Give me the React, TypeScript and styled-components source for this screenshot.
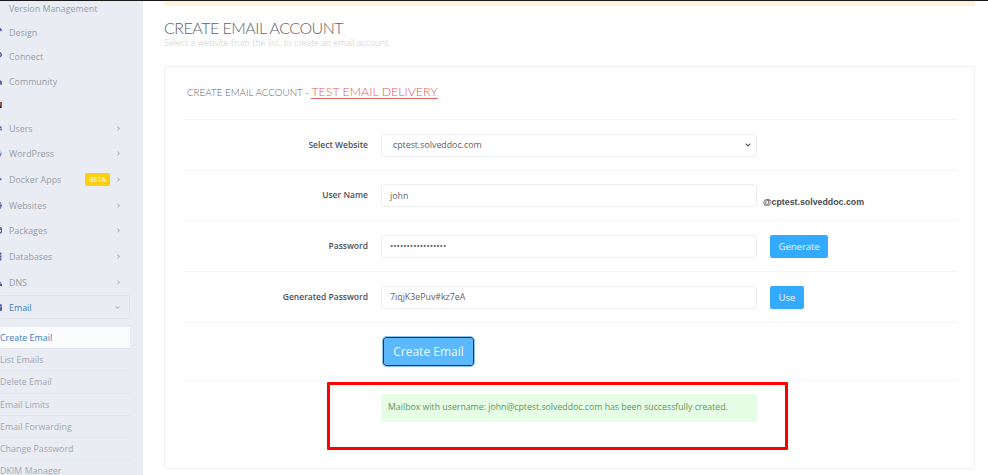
import React from 'react';
import styled, { createGlobalStyle } from 'styled-components';
import { FaChevronRight, FaChevronDown, FaUsers, FaWordpress, FaDocker, FaGlobe, FaCube, FaDatabase, FaSitemap, FaEnvelope, FaPencilAlt, FaLink, FaComments } from 'react-icons/fa';

const GlobalStyle = createGlobalStyle`
  html, body {
    margin: 0;
    padding: 0;
    background: #fff;
    font-family: "Open Sans", "Liberation Sans", sans-serif;
  }
`;

const Page = styled.div`
  display: grid;
  grid-template-columns: 143px 1fr;
  height: 475px;
  width: 988px;
  overflow: hidden;
  position: relative;
  border-top: 1px solid #1a1a1a;
  box-sizing: border-box;
`;

const Sidebar = styled.nav`
  background: #e9ecf3;
  overflow: hidden;
  height: 475px;
`;

const SideList = styled.div`
  display: flex;
  flex-direction: column;
  margin-top: -5px;
  width: 130px;
`;

const SideRow = styled.div<{ $h: number; $active?: boolean }>`
  display: flex;
  align-items: center;
  height: ${(p) => p.$h}px;
  flex: none;
  color: ${(p) => (p.$active ? '#3f7cc0' : '#9a9da6')};
  font-size: 8.9px;
  box-sizing: border-box;
  padding-right: 9px;
  ${(p) =>
    p.$active &&
    `
    border: 1px solid #e0e3ea;
    border-left: none;
    border-radius: 2px;
  `}
`;

const SideIcon = styled.span`
  display: flex;
  width: 9px;
  margin-left: -7px;
  margin-right: 7px;
  flex: none;
  color: #55589f;
  font-size: 9px;
`;

const SideLabel = styled.span`
  flex: 1;
  white-space: nowrap;
`;

const SectionMark = styled.div`
  height: 22px;
  line-height: 24px;
  margin-left: -5px;
  font-size: 9px;
  font-weight: 700;
  color: #222;
  flex: none;
`;

const Beta = styled.span`
  background: #fbcf0f;
  color: #fff;
  font-size: 7px;
  border-radius: 2px;
  width: 25px;
  height: 13px;
  line-height: 13px;
  text-align: center;
  margin-right: 6px;
`;

const Chevron = styled.span`
  display: flex;
  color: #a4a7b0;
  font-size: 5px;
`;

const SubList = styled.div`
  display: flex;
  flex-direction: column;
  margin-top: 8px;
`;

const SubRow = styled.div<{ $current?: boolean }>`
  height: 22.2px;
  line-height: 22px;
  flex: none;
  box-sizing: border-box;
  font-size: 8.9px;
  white-space: nowrap;
  color: ${(p) => (p.$current ? '#3f7cc0' : '#a4a7b0')};
  background: ${(p) => (p.$current ? '#fbfcfe' : 'transparent')};
  border-bottom: 1px solid #e2e5ec;
`;

const Main = styled.main`
  display: flex;
  flex-direction: column;
  padding: 0 13px 0 21px;
  min-width: 0;
`;

const Banner = styled.div`
  height: 5px;
  flex: none;
  background: #fdf3dc;
`;

const Title = styled.h1`
  margin: 14px 0 0;
  font-family: Lato, "Open Sans", sans-serif;
  font-weight: 300;
  font-size: 16px;
  letter-spacing: -0.5px;
  line-height: 16px;
  color: #60636b;
`;

const Subtitle = styled.p`
  margin: 0;
  font-family: Lato, "Open Sans", sans-serif;
  font-weight: 300;
  font-size: 9.25px;
  line-height: 13px;
  color: #c6c8cc;
`;

const Card = styled.section`
  margin-top: 17px;
  height: 403px;
  flex: none;
  box-sizing: border-box;
  border: 1px solid #eff0f3;
  border-radius: 3px;
  padding: 0 17px;
`;

const CardTitle = styled.h2`
  display: flex;
  align-items: baseline;
  margin: 0;
  height: 53px;
  padding: 18px 0 0 5px;
  box-sizing: border-box;
  font-family: Lato, "Open Sans", sans-serif;
  font-weight: 300;
  font-size: 9.8px;
  color: #63666d;
  white-space: pre;
  border-bottom: 1px dotted #eceef1;
`;

const TestLink = styled.a`
  color: #d9605f;
  font-size: 12.4px;
  border-bottom: 1.5px solid #d9605f;
  line-height: 13px;
`;

const FormRow = styled.div<{ $h: number }>`
  display: grid;
  grid-template-columns: 186px 376px 1fr;
  column-gap: 13px;
  align-items: center;
  height: ${(p) => p.$h}px;
  box-sizing: border-box;
  border-bottom: 1px dotted #eceef1;
`;

const Label = styled.label`
  text-align: right;
  font-size: 8.5px;
  font-weight: 600;
  color: #4e5158;
  white-space: nowrap;
  margin-top: -2px;
`;

const Field = styled.div`
  height: 23px;
  box-sizing: border-box;
  border: 1px solid #eceef2;
  border-radius: 3px;
  display: flex;
  align-items: center;
  justify-content: space-between;
  padding: 0 5px 0 8px;
  font-size: 8.8px;
  color: #5f626a;
`;

const SelectValue = styled.span`
  padding-left: 3px;
`;

const Caret = styled.span`
  display: flex;
  color: #444;
  font-size: 6px;
`;

const Side = styled.div`
  display: flex;
  align-items: center;
`;

const Domain = styled.span`
  font-family: "Liberation Sans", Arial, sans-serif;
  font-weight: 700;
  font-size: 8.8px;
  color: #4a4c52;
  margin: 12px 0 0 -7px;
  white-space: nowrap;
`;

const SmallButton = styled.button`
  height: 23px;
  padding: 0 8.5px;
  border: none;
  border-radius: 2px;
  background: #33aaff;
  color: #eef8ff;
  font-family: inherit;
  font-size: 9.5px;
`;

const CreateButton = styled.button`
  width: 91px;
  height: 29px;
  margin-left: 2px;
  box-sizing: border-box;
  border: 1.5px solid #1a3a55;
  border-radius: 3px;
  outline: 1px solid #8fc4e6;
  background: #5cb8fc;
  color: #eef8ff;
  font-family: inherit;
  font-size: 12px;
`;

const Alert = styled.div`
  height: 28px;
  box-sizing: border-box;
  background: #e6fde6;
  color: #5d9560;
  font-size: 8.76px;
  line-height: 27px;
  padding-left: 7px;
  white-space: nowrap;
  border-radius: 1px;
`;

const AlertRow = styled.div`
  display: grid;
  grid-template-columns: 186px 376px;
  column-gap: 13px;
  padding-top: 13px;
`;

const Highlight = styled.div`
  position: absolute;
  left: 327px;
  top: 381px;
  width: 461px;
  height: 68px;
  box-sizing: border-box;
  border: 3px solid #fe0000;
  border-radius: 1px;
`;

const upper = [
  { label: 'Version Management', icon: null },
  { label: 'Design', icon: <FaPencilAlt /> },
  { label: 'Connect', icon: <FaLink /> },
  { label: 'Community', icon: <FaComments /> },
];

const lower = [
  { label: 'Users', icon: <FaUsers /> },
  { label: 'WordPress', icon: <FaWordpress /> },
  { label: 'Docker Apps', icon: <FaDocker />, beta: true },
  { label: 'Websites', icon: <FaGlobe /> },
  { label: 'Packages', icon: <FaCube /> },
  { label: 'Databases', icon: <FaDatabase /> },
  { label: 'DNS', icon: <FaSitemap /> },
];

const subItems = ['List Emails', 'Delete Email', 'Email Limits', 'Email Forwarding', 'Change Password', 'DKIM Manager'];

const App: React.FC = () => {
  return (
    <>
      <GlobalStyle />
      <Page>
        <Sidebar>
          <SideList>
            {upper.map(({ label, icon }) => (
              <SideRow $h={24.3} key={label}>
                <SideIcon>{icon}</SideIcon>
                <SideLabel>{label}</SideLabel>
              </SideRow>
            ))}
            <SectionMark>N</SectionMark>
            {lower.map(({ label, icon, beta }) => (
              <SideRow $h={25.7} key={label}>
                <SideIcon>{icon}</SideIcon>
                <SideLabel>{label}</SideLabel>
                {beta && <Beta>BETA</Beta>}
                <Chevron><FaChevronRight /></Chevron>
              </SideRow>
            ))}
            <SideRow $h={24} $active>
              <SideIcon><FaEnvelope /></SideIcon>
              <SideLabel>Email</SideLabel>
              <Chevron><FaChevronDown /></Chevron>
            </SideRow>
            <SubList>
              <SubRow $current>Create Email</SubRow>
              {subItems.map((item) => (
                <SubRow key={item}>{item}</SubRow>
              ))}
            </SubList>
          </SideList>
        </Sidebar>
        <Main>
          <Banner />
          <Title>CREATE EMAIL ACCOUNT</Title>
          <Subtitle>Select a website from the list, to create an email account.</Subtitle>
          <Card>
            <CardTitle>CREATE EMAIL ACCOUNT - <TestLink>TEST EMAIL DELIVERY</TestLink></CardTitle>
            <FormRow $h={51}>
              <Label>Select Website</Label>
              <Field>
                <SelectValue>cptest.solveddoc.com</SelectValue>
                <Caret><FaChevronDown /></Caret>
              </Field>
            </FormRow>
            <FormRow $h={50}>
              <Label>User Name</Label>
              <Field>john</Field>
              <Domain>@cptest.solveddoc.com</Domain>
            </FormRow>
            <FormRow $h={51}>
              <Label>Password</Label>
              <Field>•••••••••••••••••</Field>
              <Side><SmallButton>Generate</SmallButton></Side>
            </FormRow>
            <FormRow $h={51}>
              <Label>Generated Password</Label>
              <Field>7iqjK3ePuv#kz7eA</Field>
              <Side><SmallButton>Use</SmallButton></Side>
            </FormRow>
            <FormRow $h={58}>
              <span />
              <Side><CreateButton>Create Email</CreateButton></Side>
            </FormRow>
            <AlertRow>
              <span />
              <Alert>Mailbox with username: john@cptest.solveddoc.com has been successfully created.</Alert>
            </AlertRow>
          </Card>
        </Main>
        <Highlight />
      </Page>
    </>
  );
};

export default App;
